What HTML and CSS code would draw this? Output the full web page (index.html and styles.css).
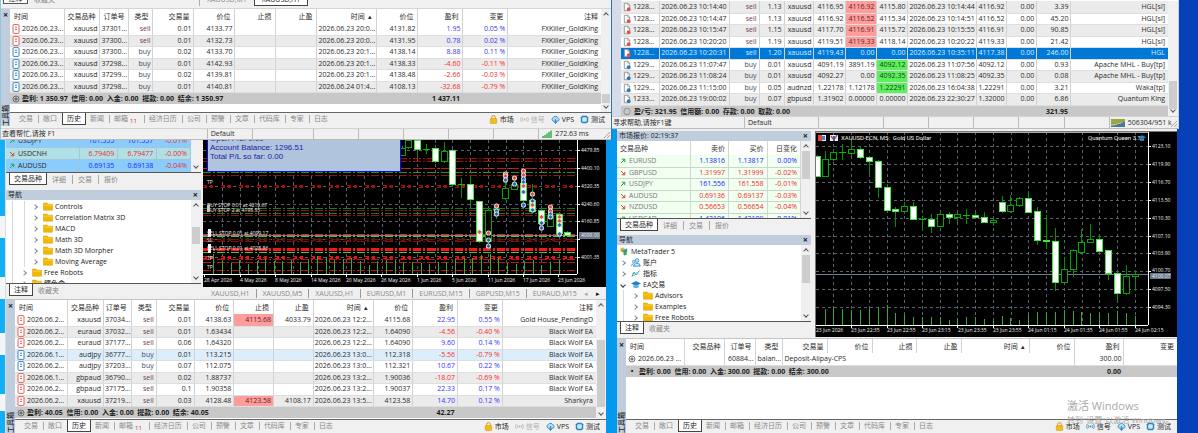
FILE: index.html
```html
<!DOCTYPE html>
<html lang="zh-CN">
<head>
<meta charset="utf-8">
<title>MetaTrader 5</title>
<link rel="stylesheet" href="styles.css">
</head>
<body>
<svg class="defs" aria-hidden="true">
  <symbol id="i-sheet" viewBox="0 0 8 10"><rect x="1" y=".6" width="6" height="8.8" rx="1" fill="#fff" stroke="currentColor" stroke-width=".9"/><path d="M3 3.2h2M3 5.4h2" stroke="currentColor" stroke-width=".9"/></symbol>
  <symbol id="i-doc" viewBox="0 0 9 10"><path d="M1.5.8h4l2 2v6.4h-6z" fill="#fff" stroke="#777" stroke-width=".8"/><path d="M5.3.8v2.2h2.2" fill="none" stroke="#777" stroke-width=".6"/><circle cx="6.4" cy="7.4" r="2.1" fill="currentColor"/></symbol>
  <symbol id="i-plus" viewBox="0 0 8 8"><circle cx="4" cy="4" r="3" fill="none" stroke="#555" stroke-width=".8"/><path d="M2.3 4h3.4M4 2.3v3.4" stroke="#444" stroke-width=".9"/></symbol>
  <symbol id="i-lock" viewBox="0 0 8 9"><path d="M2.2 4V2.4a1.8 1.8 0 0 1 3.6 0V4" fill="none" stroke="#c99a16"/><rect x=".8" y="3.6" width="6.4" height="4.8" rx=".6" fill="#f5bd1a" stroke="#d59a0c" stroke-width=".6"/></symbol>
  <symbol id="i-sig" viewBox="0 0 10 8"><circle cx="5" cy="4" r="1" fill="currentColor"/><path d="M3.1 2.3q-1.2 1.7 0 3.4M6.9 2.3q1.2 1.7 0 3.4M1.5 1.2q-1.8 2.8 0 5.6M8.5 1.2q1.8 2.8 0 5.6" fill="none" stroke="currentColor" stroke-width=".8"/></symbol>
  <symbol id="i-cloud" viewBox="0 0 9 9"><path d="M2.3 6.2a1.9 1.9 0 0 1 0-3.6 2.5 2.5 0 0 1 4.5.2 1.8 1.8 0 0 1 .2 3.4z" fill="#b5dcf5" stroke="#1c78b8" stroke-width=".8"/><path d="M4.5 4v4.3M3 7l1.5 1.4L6 7" fill="none" stroke="#1c78b8" stroke-width=".8"/></symbol>
  <symbol id="i-test" viewBox="0 0 9 9"><path d="M2.3.8h4.4l1.5 1.5v4.4L6.7 8.200H2.300L.8 6.700V2.300z" fill="#2487c4"/><rect x="2.200" y="2.200" width="4.600" height="4.600" rx="1" fill="#cfe9fa"/></symbol>
  <symbol id="i-folder" viewBox="0 0 10 9"><path d="M.5 1h3.600l1 1.200h4.400v6H.5z" fill="#f2b705" stroke="#d79e00" stroke-width=".5"/><path d="M.8 3.200h8.400" stroke="#ffd84a" stroke-width=".7"/></symbol>
  <symbol id="i-up" viewBox="0 0 6 6"><path d="M1 5l3.500-3.500M1.800 1.200h3v3" fill="none" stroke="#21a04a"/></symbol>
  <symbol id="i-down" viewBox="0 0 6 6"><path d="M1 1l3.500 3.500M1.800 4.800h3v-3" fill="none" stroke="#d8432f"/></symbol>
  <symbol id="i-bars" viewBox="0 0 10 8"><path d="M1 8V6M3 8V5M5 8V3.500M7 8V2M9 8V.5" stroke="#27a844" stroke-width="1.400"/></symbol>
  <symbol id="i-traffic" viewBox="0 0 14 8"><path d="M0 0h14v2L9 4 4 5.500 0 6z" fill="#9aa83a"/><path d="M1 8V6.500M3 8V6.200M5 8V5.800M7 8V5M9 8V4.500M11 8V3.500M13 8V2.500" stroke="#1c4f78" stroke-width="1.500"/></symbol>
  <symbol id="i-mt" viewBox="0 0 10 10"><circle cx="3.500" cy="3.200" r="2.600" fill="#f1b416"/><path d="M1 2.500l3 1.500 4.500-2.500v4L5 6.500z" fill="#2b8fdb"/><path d="M4 6.500l4-2v4L5 9.500z" fill="#2fae3c"/></symbol>
  <symbol id="i-acc" viewBox="0 0 10 9"><circle cx="6" cy="2.500" r="1.800" fill="#cbe6f7" stroke="#2487c4" stroke-width=".8"/><path d="M2.500 8.200q.4-3 3.500-3t3.300 3z" fill="#cbe6f7" stroke="#2487c4" stroke-width=".8"/><circle cx="2.800" cy="3.500" r="1.300" fill="#cbe6f7" stroke="#2487c4" stroke-width=".7"/><path d="M.5 8.200q0-2.400 2.200-2.600" fill="none" stroke="#2487c4" stroke-width=".8"/></symbol>
  <symbol id="i-ind" viewBox="0 0 10 9"><path d="M1 7.500L3 3l2 3 3.500-4.500" fill="none" stroke="#2c9c7c" stroke-width=".9"/><path d="M1 4l2 3 2.500-4 3 3" fill="none" stroke="#6aa9dd" stroke-width=".6"/></symbol>
  <symbol id="i-cap" viewBox="0 0 10 9"><path d="M0 3.500L5 1l5 2.500L5 6z" fill="#2487c4"/><path d="M2.300 5v2.200q2.700 1.600 5.400 0V5L5 6.400z" fill="#4aa6de"/></symbol>
  <symbol id="i-grip" viewBox="0 0 8 8"><path d="M7 1L1 7M7 4L4 7M7 6.500L6.500 7" stroke="#a5a5a5"/></symbol>
</svg>

<main class="desktop">
  <div class="col col-left">
    <section class="win win-a">
      <div class="strip-top">
        <button class="side-tab">注释</button><span class="faint">收藏夹</span>
        <div class="top-tabs"><button class="ctab">XAUUSD,M1</button><button class="ctab active">XAUUSD,H1</button></div>
      </div>
      <div class="toolbox">
        <div class="rail"><button class="x" aria-label="关闭">×</button><span class="vert">工具箱</span></div>
        <div class="tool-main">
          <div class="scroller"><table class="grid" id="t-a"></table><div class="sb"><i class="chev up"></i><b class="thumb low"></b><i class="chev dn"></i></div></div>
          <nav class="tabs" data-mail="11"></nav>
        </div>
      </div>
      <div class="status"><span class="s-help">查看帮忙,请按 F1</span><span class="s-def">Default</span><span class="s-wide"></span><span></span><span></span><span></span><span></span><span></span><span class="s-net"><svg class="ic"><use href="#i-bars"/></svg>272.63 ms</span><svg class="grip"><use href="#i-grip"/></svg></div>
    </section>

    <section class="win win-b">
      <div class="upper">
        <aside class="side">
          <div class="mw-clip"><table class="quotes blue" id="q-b"></table><div class="sb"><i class="chev dn"></i></div></div>
          <nav class="side-tabs"><button class="active">交易品种</button><button>详细</button><button>交易</button><button>报价</button></nav>
          <header class="cap">导航<button class="x" aria-label="关闭">×</button></header>
          <div class="tree-wrap"><ul class="tree deep" id="tree-b"></ul><div class="sb"><i class="chev up"></i><b class="thumb mid"></b><i class="chev dn"></i></div></div>
          <nav class="side-tabs"><button class="active">注释</button><button>收藏夹</button></nav>
        </aside>
        <div class="chart-col">
          <div class="chart"><svg id="chart-b"></svg>
            <div class="panel"><p>Open P/L: 0.00</p><p>Account Balance: 1296.51</p><p>Total P/L so far: 0.00</p></div>
          </div>
          <nav class="chart-tabs"><button>XAUUSD,H1</button><button>XAUUSD,M5</button><button>XAUUSD,H1</button><button>EURUSD,M1</button><button>EURUSD,M15</button><button>GBPUSD,M15</button><button>EURAUD,M15</button><span class="arrows"><i>◂</i><i class="on">▸</i></span></nav>
        </div>
      </div>
      <div class="toolbox">
        <div class="rail"><button class="x" aria-label="关闭">×</button><span class="vert">工具箱</span></div>
        <div class="tool-main">
          <div class="scroller"><table class="grid" id="t-b"></table><div class="sb"><i class="chev up"></i><b class="thumb long"></b><i class="chev dn"></i></div></div>
          <nav class="tabs" data-mail="11"></nav>
        </div>
      </div>
    </section>
  </div>

  <div class="col col-right">
    <section class="win win-c">
      <div class="toolbox">
        <div class="rail"></div>
        <div class="tool-main">
          <div class="scroller"><table class="grid" id="t-c"></table><div class="sb"><b class="thumb end"></b><i class="chev dn"></i></div></div>
        </div>
      </div>
      <div class="status"><span class="s-help">寻求帮助,请按F1键</span><span class="s-def">Default</span><span class="s-wide"></span><span></span><span></span><span></span><span></span><span></span><span class="s-net"><svg class="ic wide"><use href="#i-traffic"/></svg>506304/951 k</span><svg class="grip"><use href="#i-grip"/></svg></div>
    </section>

    <section class="win win-d">
      <div class="upper">
        <aside class="side">
          <header class="cap">市场报价: 02:19:37<button class="x" aria-label="关闭">×</button></header>
          <div class="mw"><table class="quotes green" id="q-d"></table><div class="sb"><i class="chev up"></i><b class="thumb top"></b><i class="chev dn"></i></div></div>
          <nav class="side-tabs"><button class="active">交易品种</button><button>详细</button><button>交易</button><button>报价</button></nav>
          <header class="cap">导航<button class="x" aria-label="关闭">×</button></header>
          <div class="tree-wrap"><ul class="tree" id="tree-d"></ul><div class="sb"><i class="chev up"></i><b class="thumb top"></b><i class="chev dn"></i></div></div>
          <nav class="side-tabs"><button class="active">注释</button><button>收藏夹</button></nav>
        </aside>
        <div class="chart"><svg id="chart-d"></svg></div>
      </div>
      <div class="toolbox">
        <div class="rail"><button class="x" aria-label="关闭">×</button><span class="vert">工具箱</span></div>
        <div class="tool-main">
          <div class="scroller"><table class="grid" id="t-d"></table></div>
          <nav class="tabs" data-live="1"></nav>
        </div>
      </div>
      <div class="watermark"><strong>激活 Windows</strong><span>转到"设置"以激活 Windows。</span></div>
    </section>
  </div>
</main>
<script src="app.js"></script>
</body>
</html>
```

FILE: styles.css
```css
* { box-sizing: border-box; }
html, body { margin: 0; }
body {
  min-height: 100vh;
  display: flex;
  font: 7px/11px "Open Sans", "Noto Sans CJK SC", sans-serif;
  color: #2a2a2a;
  background: linear-gradient(90deg, #0a9df0 0, #0397ee 60%, #0a44bd 90%, #0540b8 100%);
  overflow: hidden;
}
button { font: inherit; color: inherit; border: 0; background: none; padding: 0; margin: 0; white-space: nowrap; }
table { border-collapse: collapse; border-spacing: 0; }
p, ul { margin: 0; padding: 0; list-style: none; }
.defs { position: absolute; width: 0; height: 0; }

.desktop { flex: 1; display: grid; grid-template-columns: 612fr 586fr; }
.col { display: flex; flex-direction: column; min-width: 0; }
.col-left {
  background:
    linear-gradient(180deg, #12aef6 50%, #f2f6f8 50% 55%, #12aef6 55% 64%, #f2f6f8 64% 69%, #12aef6 69% 77%, #f2f6f8 77% 82%, #12aef6 82% 91%, #f2f6f8 91% 95%, #12aef6 95%) 0 0 / 5px 100% no-repeat,
    #0397ee;
}
.col-right { padding-right: 19px; }
.win { background: #f0f0f0; display: flex; flex-direction: column; position: relative; min-width: 0; }
.win-a { border-left: 1px solid #8fc5e0; border-right: 1px solid #2f76ad; }
.win-b { flex: 1; margin: 0 6px 0 5px; border-left: 1px solid #d5dde5; }
.win-c { border-right: 1px solid #c8d4e4; }
.win-d { flex: 1; margin: 0 2px 0 5px; padding-top: 2px; }

/* strip above the first toolbox */
.strip-top { height: 9px; overflow: hidden; display: flex; align-items: flex-end; padding-left: 2px; border-bottom: 1px solid #d5d5d5; }
.side-tab { height: 11px; width: 25px; margin-bottom: 4px; border: 1px solid #555; background: #fff; line-height: 5px; }
.faint { color: #888; margin: 0 0 3px 6px; }
.top-tabs { display: flex; align-items: flex-end; margin: 0 0 2px auto; width: 412px; height: 9px; border-left: 1px solid #aaa; }
.ctab { height: 12px; padding: 0 7px; color: #888; line-height: 8px; }
.ctab.active { border: 1px solid #444; background: #fff; color: #222; }

/* toolbox */
.toolbox { display: flex; }
.win-b .toolbox, .win-d .toolbox { flex: 1; border-top: 1px solid #c4c4c4; }
.rail { width: 9px; flex: none; background: #bfcddd; display: flex; flex-direction: column; align-items: center; justify-content: space-between; overflow: hidden; }
.win-c .rail { background: #d3dce8; }
.x { font: bold 9px/12px "Open Sans", sans-serif; color: #222; }
.vert { writing-mode: vertical-rl; transform: rotate(180deg); text-orientation: sideways; line-height: 9px; color: #222; height: 21px; font-weight: 500; }
.tool-main { flex: 1; min-width: 0; display: flex; flex-direction: column; }
.scroller { display: flex; flex: 1; background: #fff; align-items: stretch; }
.win-a .scroller { padding-bottom: 8px; }
.win-a .sb { margin-bottom: -8px; }
.win-c .scroller { flex: none; height: 116px; overflow: hidden; padding-top: 1px; }
.grid { flex: 1; table-layout: fixed; width: 100%; align-self: flex-start; }
.grid th, .grid td { padding: 0 2px 0 1px; text-align: right; white-space: nowrap; overflow: hidden; border-right: 1px solid #d2d2d2; }
.grid th { height: 14px; padding-right: 4px; font-weight: 400; }
.grid th:first-child { text-align: left; padding-left: 4px; }
.grid td:first-child { text-align: left; padding-left: 2px; }
.grid th:last-child, .grid td:last-child { border-right: 0; padding-right: 3px; }
.grid tbody tr { height: 11px; line-height: 10px; }
.grid tbody tr:nth-child(odd) { height: 12px; }
.grid tbody tr td { border-bottom: 1px solid #dedede; }
.grid .alt { background: #ebebeb; }
.grid .hot { background: #dceefc; }
.grid .sel { background: #0078d7; color: #dcefff; }
.grid td.l { text-align: left; }
.grid td.pos { color: #3a33ff; }
.grid td.neg { color: #fb2a2a; }
.grid td.hit { background: #ff9c9c; color: #5a2626; }
.grid td.win-tp { background: #5cf05c; color: #164016; }
.grid td.sell { color: #6d3b50; }
.grid td.buy { color: #39485e; }
.grid tfoot tr { height: 12px; background: #c8c8c8; color: #1c1c1c; }
.grid tfoot td { border: 0; padding-right: 3px; font-weight: 700; line-height: 11px; }
.grid svg { width: 8px; height: 10px; vertical-align: top; margin-right: 2px; }
.grid tfoot svg { width: 8px; height: 8px; margin-top: 2px; }
.grid .sell-ic { color: #e2504a; }
.grid .buy-ic { color: #2778b5; }
.dot { display: inline-block; width: 8px; text-align: center; margin-right: 3px; }

.sb { width: 10px; flex: none; background: #f0f0f0; position: relative; display: flex; flex-direction: column; justify-content: space-between; align-items: center; padding: 4px 0; }
.chev { width: 4px; height: 4px; border: solid #555; border-width: 1px 0 0 1px; transform: rotate(45deg); }
.chev.dn { transform: rotate(225deg); margin-top: auto; }
.thumb { position: absolute; left: 1px; right: 1px; background: #cdcdcd; }
.thumb.low { top: 85px; height: 9px; }
.thumb.long { top: 40px; bottom: 12px; }
.thumb.end { top: 80px; height: 28px; }
.thumb.top { top: 10px; height: 28px; }
.thumb.mid { top: 27px; height: 17px; }

.tabs { display: flex; height: 14px; padding-left: 5px; border-top: 1px solid #666; background: #f0f0f0; align-items: flex-start; color: #888; }
.tabs button { padding: 0 5px 0 4px; border-right: 1px solid #aaa; height: 8px; line-height: 8px; margin-top: 2px; }
.tabs button.active { height: 12px; line-height: 11px; background: #fff; border: 1px solid #444; border-top: 0; margin: 0; color: #222; padding: 0 4px; }
.tabs button.before { border-right: 0; }
.tabs sub { color: #e02020; font-size: 6px; line-height: 0; margin: 0 2px; }
.tabs .tools { margin-left: auto; display: flex; gap: 6px; padding-right: 6px; color: #222; line-height: 13px; }
.tabs .tools a { display: flex; gap: 2px; align-items: center; color: inherit; text-decoration: none; }
.tabs .tools svg { width: 9px; height: 9px; }
.tabs .tools .off { color: #b0b0b0; }
.tabs .tools .live svg { color: #2487c4; }

.status { display: flex; height: 12px; align-items: stretch; border-top: 1px solid #d2d2d2; border-bottom: 1px solid #bbb; position: relative; margin-top: 2px; line-height: 10px; }
.win-c .status { margin-top: 0; height: 13px; line-height: 11px; }
.status span { flex: 44; border-left: 1px solid #bbb; white-space: nowrap; padding-left: 3px; min-width: 0; }
.status .s-help { flex: 220; border: 0; padding-left: 1px; }
.status .s-wide { flex: 62; }
.status .s-net { flex: 74; display: flex; gap: 3px; align-items: center; }
.win-c .s-help { flex: 140; }
.win-c .s-def { flex: 75; }
.win-c .s-wide { flex: 65; }
.win-c .s-net { flex: 72; padding-left: 1px; }
.ic { width: 10px; height: 8px; flex: none; }
.ic.wide { width: 14px; }
.grip { position: absolute; right: 0; bottom: 0; width: 8px; height: 8px; }

/* side panels */
.upper { display: flex; min-width: 0; }
.win-b .upper { gap: 2px; }
.win-d .upper { gap: 4px; padding-bottom: 1px; }
.side { width: 195px; flex: none; display: flex; flex-direction: column; }
.win-d .side { width: 194px; }
.cap { height: 10px; line-height: 10px; background: #bfcddd; display: flex; justify-content: space-between; padding: 0 3px 0 2px; color: #222; }
.cap .x { line-height: 10px; }
.mw-clip { height: 32px; overflow: hidden; display: flex; align-items: flex-end; }
.mw-clip .sb { align-self: stretch; }
.mw { height: 77px; overflow: hidden; display: flex; background: #fff; }
.quotes { flex: 1; table-layout: fixed; align-self: flex-start; }
.mw-clip .quotes { align-self: flex-end; }
.quotes th { font-weight: 400; height: 14px; color: #333; }
.quotes th, .quotes td { text-align: right; padding: 0 3px 0 0; border-right: 1px solid #cfd8d2; white-space: nowrap; overflow: hidden; }
.quotes th:first-child, .quotes td:first-child { text-align: left; padding-left: 3px; width: 73px; }
.quotes tbody tr { height: 12px; line-height: 10px; }
.quotes tbody tr:nth-child(even) { height: 11px; }
.quotes svg { width: 6px; height: 6px; margin: 2px 3px 0 0; vertical-align: top; }
.quotes td { border-bottom: 1px solid #c9d6cc; }
.green tbody { background: #f0fff0; }
.green td:first-child { color: #777; }
.blue tbody tr { height: 12px; background: #8accfb; }
.blue tbody tr:nth-child(even) { background: #b0e0e6; height: 12px; }
.blue td { border-color: #9ec6dc; }
.up-n { color: #2222ff; }
.dn-n { color: #f02a2a; }
.side-tabs { display: flex; height: 17px; border-top: 1px solid #555; padding-left: 3px; color: #888; align-items: flex-start; }
.win-b .side-tabs { height: 18px; }
.win-b .side-tabs:last-child, .win-d .side-tabs:last-child { height: 15px; }
.side-tabs button { padding: 0 6px 0 5px; height: 9px; line-height: 9px; margin-top: 2px; border-right: 1px solid #aaa; }
.side-tabs button:last-child { border: 0; }
.side-tabs button.active { color: #222; background: #fff; border: 1px solid #444; border-top: 0; height: 12px; line-height: 11px; margin: 0; padding: 0 4px; }

.tree-wrap { display: flex; background: #fff; height: 83px; overflow: hidden; }
.win-d .tree-wrap { height: 76px; }
.tree { flex: 1; background: #fff; padding-top: 1px; }
.tree li { display: flex; align-items: center; gap: 2px; height: 11px; padding-left: 4px; color: #222; white-space: nowrap; }
.tree li::before { content: ""; width: 3px; height: 3px; border: solid #888; border-width: 1px 1px 0 0; transform: rotate(45deg); margin-right: 4px; }
.tree li.open::before { transform: rotate(135deg); border-color: #333; }
.tree li.root { padding-left: 2px; }
.tree li.root::before { display: none; }
.tree .d2 { padding-left: 16px; background: linear-gradient(90deg, transparent 6px, #d8d8d8 6px 7px, transparent 7px); }
.tree .d3 { padding-left: 27px; background: linear-gradient(90deg, transparent 6px, #d8d8d8 6px 7px, transparent 7px 18px, #d8d8d8 18px 19px, transparent 19px); }
.tree svg { width: 10px; height: 9px; flex: none; }

/* charts */
.chart-col { flex: 1; min-width: 0; display: flex; flex-direction: column; }
.chart { position: relative; background: #000; flex: 1; min-width: 0; overflow: hidden; }
.chart svg { display: block; width: 100%; height: 147px; }
.win-d .chart svg { height: 205px; }
.win-d .chart { border-left: 1px solid #777; border-top: 1px solid #777; align-self: flex-start; }
.chart text { font: 5px "Open Sans", sans-serif; fill: #f0f0f0; }
.chart text.title { font: 6px Roboto, sans-serif; }
.chart svg.cap-ic { width: 8px; height: 8px; }
.panel { position: absolute; left: 4px; top: -14px; width: 194px; height: 46px; padding: 8px 2px 0; background: #b0c4de; border: 1px solid #0c0cf0; border-top: 0; font: 8px/9px "Liberation Sans", sans-serif; color: #1c1ca0; }
.chart-tabs { display: flex; height: 11px; padding-left: 2px; color: #888; align-items: center; margin-top: 1px; }
.chart-tabs button { padding: 0 6px; border-right: 1px solid #999; line-height: 9px; }
.chart-tabs button:nth-last-child(2) { border: 0; }
.arrows { margin-left: auto; display: flex; gap: 8px; padding-right: 6px; }
.arrows i { font-style: normal; color: #aaa; }
.arrows .on { color: #111; }

.watermark { position: absolute; right: 4px; bottom: 8px; width: 106px; display: flex; flex-direction: column; color: #a9a9a9; white-space: nowrap; font-size: 8px; }
.watermark strong { font: 400 11px/16px "Open Sans", "Noto Sans CJK SC", sans-serif; }
```

FILE: app.js
```javascript
const $ = (id) => document.getElementById(id);
const icon = (name, cls = "") => `<svg class="${cls}"><use href="#${name}"/></svg>`;

/* Cell prefixes: "!" stop-loss fill, "+" take-profit fill. */
function grid(id, o) {
  const total = o.w.reduce((a, b) => a + b, 0);
  const cols = o.w.map((w) => `<col style="width:${(w / total * 100).toFixed(2)}%">`).join("");
  const head = o.head ? `<thead><tr>${o.head.split("|").map((h) => `<th>${h}</th>`).join("")}</tr></thead>` : "";
  const body = o.rows.map((line) => {
    const [state, ...cells] = line.split("|");
    const side = cells.includes("sell") ? "sell" : "buy";
    const tds = cells.map((c, i) => {
      let cls = "", t = c;
      if (c[0] === "!") { cls = "hit"; t = c.slice(1); }
      else if (c[0] === "+") { cls = "win-tp"; t = c.slice(1); }
      else if (o.signed && o.signed.includes(i)) cls = c[0] === "-" ? "neg" : "pos";
      else if ((c === "sell" || c === "buy") && state !== "sel") cls = c;
      return `<td class="${cls}">${i === 0 ? icon(o.icon, side + "-ic") : ""}${t}</td>`;
    }).join("");
    return `<tr class="${state}">${tds}</tr>`;
  }).join("");
  const n = o.w.length, p = o.sumCol;
  const foot = `<tfoot><tr><td colspan="${p}">${o.mark}${o.sum}</td><td>${o.total}</td><td colspan="${n - p - 1}"></td></tr></tfoot>`;
  $(id).innerHTML = `<colgroup>${cols}</colgroup>${head}<tbody>${o.raw || body}</tbody>${foot}`;
}

const head = "时间|交易品种|订单号|类型|交易量|价位|止损|止盈|时间 &nbsp;▴|价位|盈利|变更|注释";

grid("t-a", {
  w: [54, 36, 29, 24, 41, 41, 41, 41, 60, 41, 45, 45, 93], head, signed: [10, 11], icon: "i-sheet",
  mark: icon("i-plus"), sumCol: 10, sum: "盈利: 1 350.97 &nbsp;信用: 0.00 &nbsp;入金: 0.00 &nbsp;提款: 0.00 &nbsp;结余: 1 350.97", total: "1 437.11",
  rows: [
    "|2026.06.23...|xauusd|37301...|sell|0.01|4133.77|||2026.06.23 20:0...|4131.82|1.95|0.05 %|FXKiller_GoldKing",
    "alt|2026.06.23...|xauusd|37300...|sell|0.01|4132.73|||2026.06.23 20:0...|4131.95|0.78|0.02 %|FXKiller_GoldKing",
    "|2026.06.23...|xauusd|37300...|buy|0.02|4133.70|||2026.06.23 20:1...|4138.14|8.88|0.11 %|FXKiller_GoldKing",
    "alt|2026.06.23...|xauusd|37298...|buy|0.01|4142.93|||2026.06.23 20:1...|4138.33|-4.60|-0.11 %|FXKiller_GoldKing",
    "|2026.06.23...|xauusd|37299...|buy|0.02|4139.81|||2026.06.23 20:1...|4138.48|-2.66|-0.03 %|FXKiller_GoldKing",
    "alt|2026.06.23...|xauusd|37298...|buy|0.01|4140.81|||2026.06.24 01:4...|4108.13|-32.68|-0.79 %|FXKiller_GoldKing"
  ]
});

grid("t-b", {
  w: [53, 36, 28, 25, 38, 40, 40, 40, 60, 40, 45, 45, 94], head, signed: [10, 11], icon: "i-sheet",
  mark: icon("i-plus"), sumCol: 10, sum: "盈利: 40.05 &nbsp;信用: 0.00 &nbsp;入金: 0.00 &nbsp;提款: 0.00 &nbsp;结余: 40.05", total: "42.27",
  rows: [
    "|2026.06.2...|xauusd|37034...|sell|0.01|4138.63|!4115.68|4033.79|2026.06.23 12:2...|4115.68|22.95|0.55 %|Gold House_PendingD",
    "alt|2026.06.2...|euraud|37032...|sell|0.01|1.63434|||2026.06.23 12:2...|1.64090|-4.56|-0.40 %|Black Wolf EA",
    "|2026.06.2...|euraud|37177...|sell|0.06|1.64320|||2026.06.23 12:2...|1.64090|9.60|0.14 %|Black Wolf EA",
    "hot|2026.06.1...|audjpy|36777...|buy|0.01|113.215|||2026.06.23 13:0...|112.318|-5.56|-0.79 %|Black Wolf EA",
    "|2026.06.2...|audjpy|37203...|buy|0.07|112.075|||2026.06.23 13:0...|112.321|10.67|0.22 %|Black Wolf EA",
    "alt|2026.06.1...|gbpaud|36790...|sell|0.02|1.88737|||2026.06.23 13:2...|1.90036|-18.07|-0.69 %|Black Wolf EA",
    "|2026.06.2...|gbpaud|37175...|sell|0.1|1.90358|||2026.06.23 13:2...|1.90037|22.33|0.17 %|Black Wolf EA",
    "alt|2026.06.2...|xauusd|37219...|sell|0.03|4128.48|!4123.58|4108.17|2026.06.23 13:5...|4123.58|14.70|0.12 %|Sharkyra"
  ]
});

grid("t-c", {
  w: [38, 70, 30, 25, 30, 32, 31, 31, 69, 30, 30, 34, 97], icon: "i-doc",
  mark: '<span class="dot">○</span>', sumCol: 11, sum: "盈/亏: 321.95 &nbsp;信用额: 0.00 &nbsp;存款: 0.00 &nbsp;取款: 0.00", total: "321.95",
  rows: [
    "alt|1228...|2026.06.23 10:14:40|sell|1.13|xauusd|4116.95|!4116.92|4115.80|2026.06.23 10:14:44|4116.92|0.00|3.39|HGL[sl]",
    "|1228...|2026.06.23 10:14:47|sell|1.13|xauusd|4116.92|!4116.52|4115.34|2026.06.23 10:14:51|4116.52|0.00|45.20|HGL[sl]",
    "alt|1228...|2026.06.23 10:15:47|sell|1.15|xauusd|4117.70|!4116.91|4115.72|2026.06.23 10:15:55|4116.91|0.00|90.85|HGL[sl]",
    "|1228...|2026.06.23 10:20:20|sell|1.19|xauusd|4119.51|!4119.33|4118.14|2026.06.23 10:20:22|4119.33|0.00|21.42|HGL[sl]",
    "sel|1228...|2026.06.23 10:20:31|sell|1.20|xauusd|4119.43|0.00|0.00|2026.06.23 10:35:11|4117.38|0.00|246.00|HGL",
    "|1229...|2026.06.23 11:07:47|buy|0.01|xauusd|4091.19|3891.19|+4092.12|2026.06.23 11:07:56|4092.12|0.00|0.93|Apache MHL - Buy[tp]",
    "alt|1229...|2026.06.23 11:08:24|buy|0.01|xauusd|4092.27|0.00|+4092.35|2026.06.23 11:08:25|4092.35|0.00|0.08|Apache MHL - Buy[tp]",
    "|1229...|2026.06.23 11:15:00|buy|0.05|audnzd|1.22178|1.12178|+1.22291|2026.06.23 16:04:38|1.22291|0.00|3.21|Waka[tp]",
    "alt|1233...|2026.06.23 19:00:02|buy|0.07|gbpusd|1.31902|0.00000|0.00000|2026.06.23 22:30:27|1.32000|0.00|6.86|Quantum King"
  ]
});

grid("t-d", {
  w: [58, 41, 31, 27, 45, 45, 44, 45, 68, 45, 49, 53], head: head.replace("|注释", ""),
  rows: [], mark: '<span class="dot">•</span>', sumCol: 10,
  sum: "盈利: 0.00 &nbsp;信用: 0.00 &nbsp;入金: 300.00 &nbsp;提款: 0.00 &nbsp;结余: 300.00", total: "0.00",
  raw: `<tr><td>${icon("i-plus")}2026.06.23 ...</td><td></td><td>60884...</td><td>balan...</td><td class="l" colspan="6">Deposit-Alipay-CPS</td><td>300.00</td><td></td></tr>`
});

/* market watch */
const quote = (r) => {
  const [dir, sym, bid, bc, ask, ac, chg, cc] = r.split(" ");
  const k = (c) => (c === "u" ? "up-n" : "dn-n");
  return `<tr><td>${icon("i-" + dir)}${sym}</td><td class="${k(bc)}">${bid}</td><td class="${k(ac)}">${ask}</td><td class="${k(cc)}">${chg}</td></tr>`;
};
$("q-b").innerHTML = "<tbody>" + [
  "up USDJPY 161.555 u 161.557 u -0.01% d",
  "down USDCNH 6.79409 d 6.79477 d -0.00% d",
  "up AUDUSD 0.69135 u 0.69138 u -0.04% d"
].map(quote).join("") + "</tbody>";
$("q-d").innerHTML = "<thead><tr><th>交易品种</th><th>卖价</th><th>买价</th><th>日变化</th></tr></thead><tbody>" + [
  "up EURUSD 1.13816 u 1.13817 u 0.00% u",
  "down GBPUSD 1.31997 d 1.31999 d -0.02% d",
  "up USDJPY 161.556 u 161.558 d -0.01% d",
  "down AUDUSD 0.69136 d 0.69137 d -0.03% d",
  "down NZDUSD 0.56653 d 0.56654 d -0.04% d",
  "up USDCAD 1.42106 u 1.42109 u 0.01% u"
].map(quote).join("") + "</tbody>";

/* navigator */
const node = ([cls, ic, t]) => `<li class="${cls}">${icon(ic)}${t}</li>`;
$("tree-b").innerHTML = [
  ...["Controls", "Correlation Matrix 3D", "MACD", "Math 3D", "Math 3D Morpher", "Moving Average"].map((t) => ["d3", "i-folder", t]),
  ["d2", "i-folder", "Free Robots"], ["d2", "i-folder", "鳄鱼盒"]
].map(node).join("");
$("tree-d").innerHTML = [
  ["root", "i-mt", "MetaTrader 5"], ["", "i-acc", "账户"], ["", "i-ind", "指标"], ["open", "i-cap", "EA交易"],
  ["d2", "i-folder", "Advisors"], ["d2", "i-folder", "Examples"], ["d2", "i-folder", "Free Robots"]
].map(node).join("");

/* toolbox tabs */
document.querySelectorAll(".tabs").forEach((nav) => {
  const names = ["交易", "敞口", "历史", "新闻", "邮箱", "经济日历", "公司", "预警", "文章", "代码库", "专家", "日志"];
  nav.innerHTML = names.map((n, i) => {
    const cls = n === "历史" ? "active" : i === 1 || i === names.length - 1 ? "before" : "";
    return `<button class="${cls}">${n}${n === "邮箱" && nav.dataset.mail ? `<sub>${nav.dataset.mail}</sub>` : ""}</button>`;
  }).join("") + `<span class="tools"><a href="#">${icon("i-lock")}市场</a><a href="#" class="${nav.dataset.live ? "live" : "off"}">${icon("i-sig")}信号</a><a href="#">${icon("i-cloud")}VPS</a><a href="#">${icon("i-test")}测试</a></span>`;
});

/* Charts: data is kept on a grid of three units per pixel. */
function painter(ox, oy) {
  const X = (v) => Math.round((v - ox) / 3), Y = (v) => Math.round((v - oy) / 3);
  let out = "";
  const api = {
    X, Y,
    add: (s) => { out += s; },
    rect: (x, y, w, h, fill) => { out += `<rect x="${x}" y="${y}" width="${w}" height="${h}" fill="${fill}"/>`; },
    h: (y, x1, x2, color, dash = "", w = 1) => { out += `<line x1="${X(x1)}" x2="${X(x2)}" y1="${Y(y) + 0.5}" y2="${Y(y) + 0.5}" stroke="${color}" stroke-width="${w}" stroke-dasharray="${dash}"/>`; },
    v: (x, y1, y2, color, dash = "") => { out += `<line x1="${X(x) + 0.5}" x2="${X(x) + 0.5}" y1="${Y(y1)}" y2="${Y(y2)}" stroke="${color}" stroke-dasharray="${dash}"/>`; },
    text: (x, y, t, cls = "") => { out += `<text class="${cls}" x="${X(x)}" y="${Y(y) + 2}">${t}</text>`; },
    candle: ([x, hi, lo, top, bot, kind]) => {
      api.v(x, hi, lo, "#009200");
      const h = Math.max(1, Y(bot) - Y(top));
      if (kind === "d") api.rect(X(x) - 3, Y(top), 7, 1, "#00c000");
      else out += `<rect x="${X(x) - 2.5}" y="${Y(top) + 0.5}" width="6" height="${h}" fill="${kind === "w" ? "#fff" : "#000"}" stroke="${kind === "w" ? "#3fe83f" : "#00a800"}"/>`;
    },
    dot: (x, y, c) => { const a = X(x) + 0.5, b = Y(y); out += `<circle cx="${a}" cy="${b}" r="2.6" fill="#ddd"/><path d="M${a - 2} ${b}l2-2 2 2-2 2z" fill="${c === "r" ? "#e8482c" : "#1668b8"}"/>`; },
    done: (id) => { $(id).innerHTML = out; }
  };
  return api;
}

(function leftChart() {
  const p = painter(9, 42), R = 1132, B = 445;
  for (let k = 0; k < 20; k++) p.v(67 + k * 53.1, 42, B, "#59616c", "3 3");
  ["4479.85", "4400.10", "4320.35", "4240.60", "4160.85", "4081.10", "4001.35"].forEach((t, i) => {
    const y = 73 + i * 53.2;
    p.h(y, 9, R, "#59616c", "3 3"); p.h(y, R, R + 9, "#fff");
    if (i !== 5) p.text(R + 12, y, t);
  });
  [[97, "#a80c0c"], [106, "#a80c0c"], [127, "#d01414"], [138, "#12a024"], [148, "#a00c0c"], [246, "#10801c"], [253, "#a00c0c"], [261, "#10801c"], [267, "#a00c0c"], [338, "#6c1010"], [346, "#8c0c0c"], [400, "#c01010"], [409, "#c01010"], [433, "#c01010"], [331, "#20e020"], [377, "#30d030"]]
    .forEach(([y, c]) => p.h(y, 9, R, c, "8 2 2 2"));
  p.h(323, 9, R, "#f81818", "8 2 2 2");
  p.h(370, 9, R, "#ff1414", "8 2 2 2", 3);
  [[180, "#a80c0c"], [340, "#5c1414"], [392, "#e01414"]].forEach(([y, c]) => { p.h(y, 9, R, c, "4 3 3 8", 3); p.h(y, 9, R, "#000", "2 16"); });
  p.h(326, 9, R, "#6f7f8f");
  const vols = [385, 402, 411, 402, 414, 404, 399, 404, 404, 402, 407, 401, 390, 392, 402, 398, 396, 404, 417, 404, 402, 402, 407, 409, 412, 414, 409, 407, 399, 395, 397, 387, 385, 397, 411, 414, 406, 402, 417, 407, 402];
  vols.forEach((v, i) => p.v(40 + i * 25.9, v, B, "#2fae2f"));
  [[606, 60, 90, 65, 88, "g"], [625, 42, 68, 42, 62, "g"], [651, 42, 97, 42, 70, "w"], [677, 55, 85, 70, 71, "d"], [704, 58, 110, 66, 104, "w"], [731, 48, 110, 76, 104, "g"], [757, 70, 183, 73, 175, "w"], [783, 157, 215, 175, 176, "d"], [810, 150, 240, 173, 220, "w"], [836, 224, 350, 226, 346, "w"], [863, 248, 372, 252, 345, "g"], [889, 230, 280, 248, 249, "d"], [916, 150, 221, 187, 215, "g"], [943, 150, 193, 175, 188, "g"], [970, 130, 240, 170, 221, "w"], [996, 173, 262, 222, 255, "w"], [1023, 250, 310, 252, 292, "w"], [1049, 240, 302, 268, 300, "g"], [1076, 262, 328, 265, 322, "w"], [1102, 316, 330, 318, 327, "w"]].forEach(p.candle);
  [[836, 318, "r"], [863, 321, "r"], [863, 341, "b"], [863, 361, "b"], [889, 239, "r"], [889, 255, "b"], [889, 263, "b"], [916, 144, "r"], [916, 151, "r"], [916, 161, "b"], [943, 155, "r"], [943, 173, "b"], [970, 136, "r"], [970, 146, "r"], [970, 158, "b"], [970, 167, "b"], [970, 181, "r"], [970, 197, "b"], [970, 238, "b"], [996, 205, "r"], [996, 224, "b"], [996, 238, "r"], [996, 251, "b"], [1023, 273, "r"], [1023, 291, "b"], [1023, 306, "b"], [1049, 244, "r"], [1049, 256, "r"], [1049, 265, "b"], [1049, 273, "b"], [1076, 272, "r"], [1076, 285, "r"], [1076, 298, "b"], [1076, 323, "b"]].forEach((d) => p.dot(...d));
  p.h(B, 9, R, "#fff"); p.v(R, 42, B, "#fff");
  ["28 Apr 2026", "4 May 2026", "8 May 2026", "14 May 2026", "20 May 2026", "26 May 2026", "1 Jun 2026", "5 Jun 2026", "11 Jun 2026", "17 Jun 2026", "23 Jun 2026"].forEach((t, i) => {
    p.text(i ? 13 + i * 106.2 : 12, 461, t); p.v(13 + i * 106.2, B, B + 9, "#fff");
  });
  [[168, "TP"], [237, "BUY STOP 0.01 at 4219.67"], [252, "BUY STOP 2 at 4195.55"], [322, "SELL STOP 0.01 at 4099.17"], [342, "SL"], [367, "SELL STOP 0.01 at 4028.86"], [396, "TP"], [423, "TP"]].forEach(([y, t]) => p.text(22, y, t));
  p.rect(5, p.Y(308), 3, 8, "#f4f4f4"); p.rect(5, p.Y(353), 3, 9, "#f4f4f4"); p.rect(4, p.Y(238), 3, 7, "#c8c8c8");
  p.rect(p.X(R) + 2, p.Y(326) - 3, 21, 7, "#66788a"); p.text(R + 12, 326, "4099.00");
  p.done("chart-b");
})();

(function rightChart() {
  const p = painter(18, 36), R = 1014, B = 614;
  for (let k = 0; k < 18; k++) p.v(70 + k * 53.2, 37, B, "#59616c", "3 3");
  ["4123.10", "4119.90", "4116.70", "4113.50", "4110.30", "4107.10", "4103.90", "4100.70", "4097.50", "4094.30"].forEach((t, i) => {
    const y = 77 + i * 53.9;
    p.h(y, 18, R, "#59616c", "3 3"); p.h(y, R, R + 9, "#fff");
    p.text(R + 12, i === 7 ? y - 5 : y, t);
  });
  p.h(463, 18, R, "#6f7f8f");
  const candles = [[20, 105, 168, 107, 167, "w"], [44, 92, 168, 118, 167, "g"], [70, 86, 124, 97, 118, "g"], [97, 72, 120, 97, 98, "d"], [124, 62, 107, 87, 98, "g"], [150, 80, 117, 87, 111, "w"], [177, 108, 166, 111, 124, "w"], [203, 120, 233, 124, 202, "w"], [230, 193, 272, 202, 269, "w"], [256, 262, 320, 267, 272, "w"], [283, 246, 282, 257, 272, "g"], [310, 247, 299, 257, 296, "w"], [336, 292, 330, 296, 298, "d"], [363, 282, 338, 298, 318, "w"], [389, 277, 322, 282, 318, "g"], [416, 275, 313, 282, 292, "w"], [442, 280, 305, 283, 292, "g"], [469, 267, 313, 285, 287, "d"], [495, 278, 297, 286, 291, "w"], [522, 275, 309, 291, 306, "w"], [548, 293, 318, 300, 305, "g"], [575, 229, 278, 246, 272, "w"], [601, 225, 278, 256, 272, "g"], [628, 230, 262, 233, 256, "g"], [655, 213, 278, 233, 275, "w"], [682, 262, 376, 274, 359, "w"], [708, 285, 385, 359, 363, "w"], [735, 323, 513, 363, 485, "w"], [761, 412, 487, 447, 485, "g"], [788, 388, 470, 391, 447, "g"], [814, 326, 400, 365, 395, "g"], [841, 312, 368, 358, 366, "g"], [868, 344, 403, 357, 392, "w"], [894, 390, 480, 391, 460, "w"], [921, 458, 545, 460, 520, "w"], [947, 435, 525, 468, 520, "g"], [974, 450, 513, 463, 467, "g"]];
  const vols = [614, 566, 563, 566, 570, 570, 567, 561, 555, 579, 585, 592, 590, 592, 592, 599, 595, 592, 590, 597, 603, 588, 595, 600, 585, 576, 576, 576, 571, 574, 576, 579, 580, 578, 572, 578, 587];
  candles.forEach((c, i) => { p.v(c[0], vols[i], B, "#2fae2f"); p.candle(c); });
  p.h(37, 18, R, "#aaa"); p.h(B, 18, R, "#fff"); p.v(R, 37, B, "#fff");
  ["23 Jun 2026", "23 Jun 22:35", "23 Jun 22:55", "23 Jun 23:15", "23 Jun 23:35", "23 Jun 23:55", "24 Jun 01:15", "24 Jun 01:35", "24 Jun 01:55", "24 Jun 02:15"].forEach((t, i) => {
    p.text(18 + i * 106.2, 630, t); if (i) p.v(17 + i * 106.3, B, B + 9, "#fff");
  });
  p.rect(p.X(24), p.Y(46), 8, 6, "#e9eef5"); p.rect(p.X(24), p.Y(46), 4, 6, "#e0493b"); p.rect(p.X(24) + 4, p.Y(46) + 1, 3, 4, "#4387c7");
  p.add(`<path d="M${p.X(60)} ${p.Y(45)}h8v6h-8z" fill="#e9eef5"/><path d="M${p.X(62)} ${p.Y(48)}l3 4 3-5" fill="none" stroke="#d33" stroke-width="1.3"/><path d="M${p.X(72)} ${p.Y(48)}v5" stroke="#2a6fb5" stroke-width="2"/>`);
  p.text(93, 54, "XAUUSD-ECN, M5: &nbsp;Gold US Dollar", "title");
  p.text(833, 54, "Quantum Queen 3.7", "title");
  p.add(`<svg class="cap-ic" x="${p.X(985)}" y="${p.Y(42)}"><use href="#i-cap"/></svg>`);
  p.rect(p.X(R) + 2, p.Y(465) - 2, 21, 6, "#66788a"); p.text(R + 12, 467, "4100.07");
  p.done("chart-d");
})();
```
